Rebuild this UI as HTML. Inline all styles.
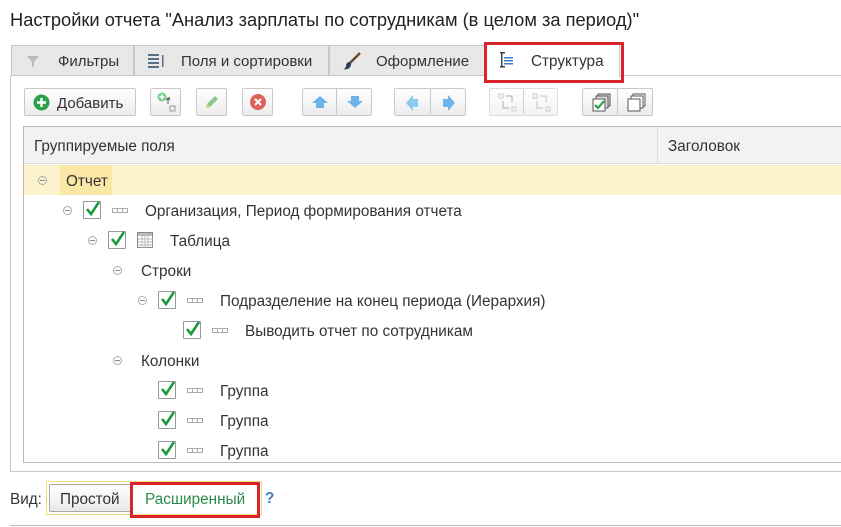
<!DOCTYPE html>
<html><head><meta charset="utf-8"><style>
body{margin:0;width:841px;height:527px;overflow:hidden;background:#fff;font-family:"Liberation Sans",sans-serif;font-size:15px;color:#333;position:relative}
.a{position:absolute}
.tab{position:absolute;top:45px;height:30px;background:#e8e8e8;border:1px solid #c8c8c8;border-bottom:none;box-sizing:border-box;line-height:31px;font-size:15px;color:#333}
.btn{position:absolute;top:88px;height:28px;box-sizing:border-box;border:1px solid #c8c8c8;border-radius:2px;background:linear-gradient(#fff,#ececec)}
.cb{position:absolute;width:18px;height:18px;border:1px solid #999;background:#fff;box-sizing:border-box;border-radius:1px}
.cb svg{position:absolute;left:1px;top:-2px}
.mn{position:absolute;width:9px;height:9px;border:1px solid #aaa;border-radius:50%;box-sizing:border-box}
.mn:after{content:"";position:absolute;left:1px;top:3px;width:5px;height:1px;background:#888}
.ic{position:absolute;width:16px;height:5px;border:1px solid #aaa;box-sizing:border-box;background:repeating-linear-gradient(90deg,#fff 0 4px,#aaa 4px 5px)}
.t{position:absolute;font-size:15.3px;color:#333;white-space:nowrap;margin-top:2px}
</style></head><body>
<div class="a" style="left:10px;top:9px;font-size:18.3px;color:#222">Настройки отчета "Анализ зарплаты по сотрудникам (в целом за период)"</div>
<div class="a" style="left:10px;top:75px;width:840px;height:397px;border:1px solid #c8c8c8;box-sizing:border-box"></div>
<div class="tab" style="left:11px;width:123px"><svg class="a" style="left:14px;top:8px" width="14" height="14"><path d="M1 2h12l-5 6v5l-2-1V8z" fill="#bbb"/></svg><span class="a" style="left:46px">Фильтры</span></div>
<div class="tab" style="left:134px;width:195px"><svg class="a" style="left:12px;top:6px" width="20" height="18"><g fill="#5a6e82"><rect x="1" y="2" width="11" height="2"/><rect x="1" y="6" width="11" height="2"/><rect x="1" y="10" width="11" height="2"/><rect x="1" y="14" width="11" height="2"/><rect x="15" y="3" width="1.5" height="12"/></g></svg><span class="a" style="left:46px">Поля и сортировки</span></div>
<div class="tab" style="left:329px;width:156px"><svg class="a" style="left:12px;top:6px" width="20" height="18"><path d="M18 1L8 11" stroke="#6b4a2a" stroke-width="2.5"/><path d="M8 10c-3 0-4 2-4 4s-2 3-3 3c3 1 8 0 8-5z" fill="#2a3a5a"/></svg><span class="a" style="left:46px">Оформление</span></div>
<div class="a" style="left:486px;top:44px;width:132px;height:32px;background:#fff;border:1px solid #c8c8c8;border-bottom:none"></div>
<svg class="a" style="left:498px;top:51px" width="18" height="18"><g fill="#444"><rect x="2" y="1" width="5" height="1.5"/><rect x="3" y="1" width="1.5" height="15"/><rect x="2" y="15" width="5" height="1.5"/></g><g fill="#3d7fc4"><rect x="6" y="6" width="9" height="1.5"/><rect x="6" y="9" width="9" height="1.5"/><rect x="6" y="12" width="9" height="1.5"/></g></svg>
<div class="t" style="left:531px;top:51px">Структура</div>
<div class="a" style="left:484px;top:42px;width:140px;height:41px;border:3px solid #d9232d;box-sizing:border-box"></div>

<div class="btn" style="left:24px;width:112px"><svg class="a" style="left:8px;top:5px" width="17" height="17"><circle cx="8.5" cy="8.5" r="8" fill="#2aa14a"/><path d="M8.5 4v9M4 8.5h9" stroke="#fff" stroke-width="2.4"/></svg><span class="a" style="left:32px;top:6px;color:#333">Добавить</span></div>
<div class="btn" style="left:150px;width:31px"><svg class="a" style="left:6px;top:3px" width="20" height="20"><circle cx="5" cy="5" r="4.5" fill="#7dce8c"/><path d="M5 2.5v5M2.5 5h5" stroke="#fff" stroke-width="1.5"/><path d="M11 12V6h2M11 6l-2 2M11 6l2 2" stroke="#555" fill="none"/><rect x="13" y="14" width="5" height="5" fill="none" stroke="#999"/></svg></div>
<div class="btn" style="left:196px;width:31px"><svg class="a" style="left:7px;top:5px" width="16" height="16"><path d="M2 14l1-4 8-8 3 3-8 8z" fill="#8dc98a"/><path d="M2 14l1-4 3 3z" fill="#e8c98a"/></svg></div>
<div class="btn" style="left:242px;width:31px"><svg class="a" style="left:6px;top:4px" width="18" height="18"><circle cx="9" cy="9" r="8" fill="#e0605e"/><path d="M6 6l6 6M12 6l-6 6" stroke="#fff" stroke-width="2"/></svg></div>
<div class="btn" style="left:302px;width:35px;border-radius:2px 0 0 2px"><svg class="a" style="left:8px;top:6px" width="18" height="14"><path d="M9 1l8 7h-4v5H5V8H1z" fill="#6fb4e8"/></svg></div>
<div class="btn" style="left:336px;width:36px"><svg class="a" style="left:9px;top:6px" width="18" height="14"><path d="M9 13l8-7h-4V1H5v5H1z" fill="#6fb4e8"/></svg></div>
<div class="btn" style="left:394px;width:37px"><svg class="a" style="left:10px;top:5px" width="14" height="18"><path d="M1 9l7-8v4h5v8H8v4z" fill="#8cc8f0"/></svg></div>
<div class="btn" style="left:430px;width:36px"><svg class="a" style="left:11px;top:5px" width="14" height="18"><path d="M13 9L6 1v4H1v8h5v4z" fill="#6fb4e8"/></svg></div>
<div class="btn" style="left:489px;width:35px;opacity:.6"><svg class="a" style="left:8px;top:4px" width="20" height="20"><rect x="1" y="1" width="4" height="4" fill="none" stroke="#aaa"/><rect x="14" y="14" width="4" height="4" fill="none" stroke="#aaa"/><path d="M8 3h6v6M5 8v7h6" stroke="#777" fill="none"/></svg></div>
<div class="btn" style="left:523px;width:35px;opacity:.6"><svg class="a" style="left:8px;top:4px" width="20" height="20"><rect x="1" y="1" width="4" height="4" fill="none" stroke="#aaa"/><rect x="14" y="14" width="4" height="4" fill="none" stroke="#aaa"/><path d="M8 3h6v6M5 8v7h6" stroke="#999" fill="none"/></svg></div>
<div class="btn" style="left:582px;width:36px"><svg class="a" style="left:9px;top:4px" width="20" height="20"><rect x="6" y="1" width="12" height="12" fill="#ddd" stroke="#555"/><rect x="4" y="3" width="12" height="12" fill="#ddd" stroke="#555"/><rect x="1" y="6" width="12" height="12" fill="#fff" stroke="#555"/><path d="M3 12l3 3 6-7" stroke="#2aa14a" stroke-width="2.2" fill="none"/></svg></div>
<div class="btn" style="left:617px;width:36px"><svg class="a" style="left:9px;top:4px" width="20" height="20"><rect x="6" y="1" width="12" height="12" fill="#fff" stroke="#555"/><rect x="4" y="3" width="12" height="12" fill="#fff" stroke="#555"/><rect x="1" y="6" width="12" height="12" fill="#fff" stroke="#555"/></svg></div>

<div class="a" style="left:23px;top:126px;width:830px;height:337px;border:1px solid #bbb;box-sizing:border-box"></div>
<div class="a" style="left:24px;top:127px;width:820px;height:36px;background:#f2f2f2;border-bottom:1px solid #ddd"></div>
<div class="a" style="left:657px;top:127px;width:1px;height:36px;background:#ddd"></div>
<div class="t" style="left:34px;top:136px">Группируемые поля</div>
<div class="t" style="left:668px;top:136px">Заголовок</div>
<div class="a" style="left:24px;top:165px;width:820px;height:30px;background:#fcf3cd"></div>
<div class="a" style="left:60px;top:165px;width:52px;height:30px;background:#fbe7a6"></div>

<div class="mn" style="left:38px;top:176px"></div><div class="t" style="left:66px;top:171px">Отчет</div>
<div class="mn" style="left:63px;top:206px"></div><div class="cb" style="left:83px;top:201px"><svg width="16" height="18"><path d="M2 9l4 5 8-12" stroke="#1a9a3e" stroke-width="2.6" fill="none"/></svg></div><div class="ic" style="left:112px;top:208px"></div><div class="t" style="left:145px;top:201px">Организация, Период формирования отчета</div>
<div class="mn" style="left:88px;top:236px"></div><div class="cb" style="left:108px;top:231px"><svg width="16" height="18"><path d="M2 9l4 5 8-12" stroke="#1a9a3e" stroke-width="2.6" fill="none"/></svg></div>
<svg class="a" style="left:137px;top:232px" width="16" height="16"><rect x=".5" y=".5" width="15" height="15" fill="#fff" stroke="#888"/><rect x="1" y="1" width="14" height="3" fill="#bbb"/><path d="M5 1v15M8 1v15M11 1v15M1 7h15M1 10h15M1 13h15" stroke="#bbb"/></svg>
<div class="t" style="left:170px;top:231px">Таблица</div>
<div class="mn" style="left:113px;top:266px"></div><div class="t" style="left:141px;top:261px">Строки</div>
<div class="mn" style="left:138px;top:296px"></div><div class="cb" style="left:158px;top:291px"><svg width="16" height="18"><path d="M2 9l4 5 8-12" stroke="#1a9a3e" stroke-width="2.6" fill="none"/></svg></div><div class="ic" style="left:187px;top:298px"></div><div class="t" style="left:220px;top:291px">Подразделение на конец периода (Иерархия)</div>
<div class="cb" style="left:183px;top:321px"><svg width="16" height="18"><path d="M2 9l4 5 8-12" stroke="#1a9a3e" stroke-width="2.6" fill="none"/></svg></div><div class="ic" style="left:212px;top:328px"></div><div class="t" style="left:245px;top:321px">Выводить отчет по сотрудникам</div>
<div class="mn" style="left:113px;top:356px"></div><div class="t" style="left:141px;top:351px">Колонки</div>
<div class="cb" style="left:158px;top:381px"><svg width="16" height="18"><path d="M2 9l4 5 8-12" stroke="#1a9a3e" stroke-width="2.6" fill="none"/></svg></div><div class="ic" style="left:187px;top:388px"></div><div class="t" style="left:220px;top:381px">Группа</div>
<div class="cb" style="left:158px;top:411px"><svg width="16" height="18"><path d="M2 9l4 5 8-12" stroke="#1a9a3e" stroke-width="2.6" fill="none"/></svg></div><div class="ic" style="left:187px;top:418px"></div><div class="t" style="left:220px;top:411px">Группа</div>
<div class="cb" style="left:158px;top:441px"><svg width="16" height="18"><path d="M2 9l4 5 8-12" stroke="#1a9a3e" stroke-width="2.6" fill="none"/></svg></div><div class="ic" style="left:187px;top:448px"></div><div class="t" style="left:220px;top:441px">Группа</div>

<div class="t" style="left:10px;top:489px">Вид:</div>
<div class="a" style="left:46px;top:481px;width:216px;height:34px;border:1px solid #f0dc7a;box-sizing:border-box"></div>
<div class="a" style="left:49px;top:484px;width:84px;height:28px;border:1px solid #aaa;border-radius:2px;box-sizing:border-box;background:linear-gradient(#fff,#e8e8e8)"></div>
<div class="t" style="left:60px;top:489px">Простой</div>
<div class="a" style="left:130px;top:482px;width:130px;height:36px;border:3px solid #d9232d;box-sizing:border-box"></div>
<div class="t" style="left:145px;top:489px;color:#2a8a4a">Расширенный</div>
<div class="t" style="left:265px;top:488px;color:#3d7fc4;font-weight:bold">?</div>
<div class="a" style="left:10px;top:525px;width:831px;height:1px;background:#bbb"></div>
</body></html>
